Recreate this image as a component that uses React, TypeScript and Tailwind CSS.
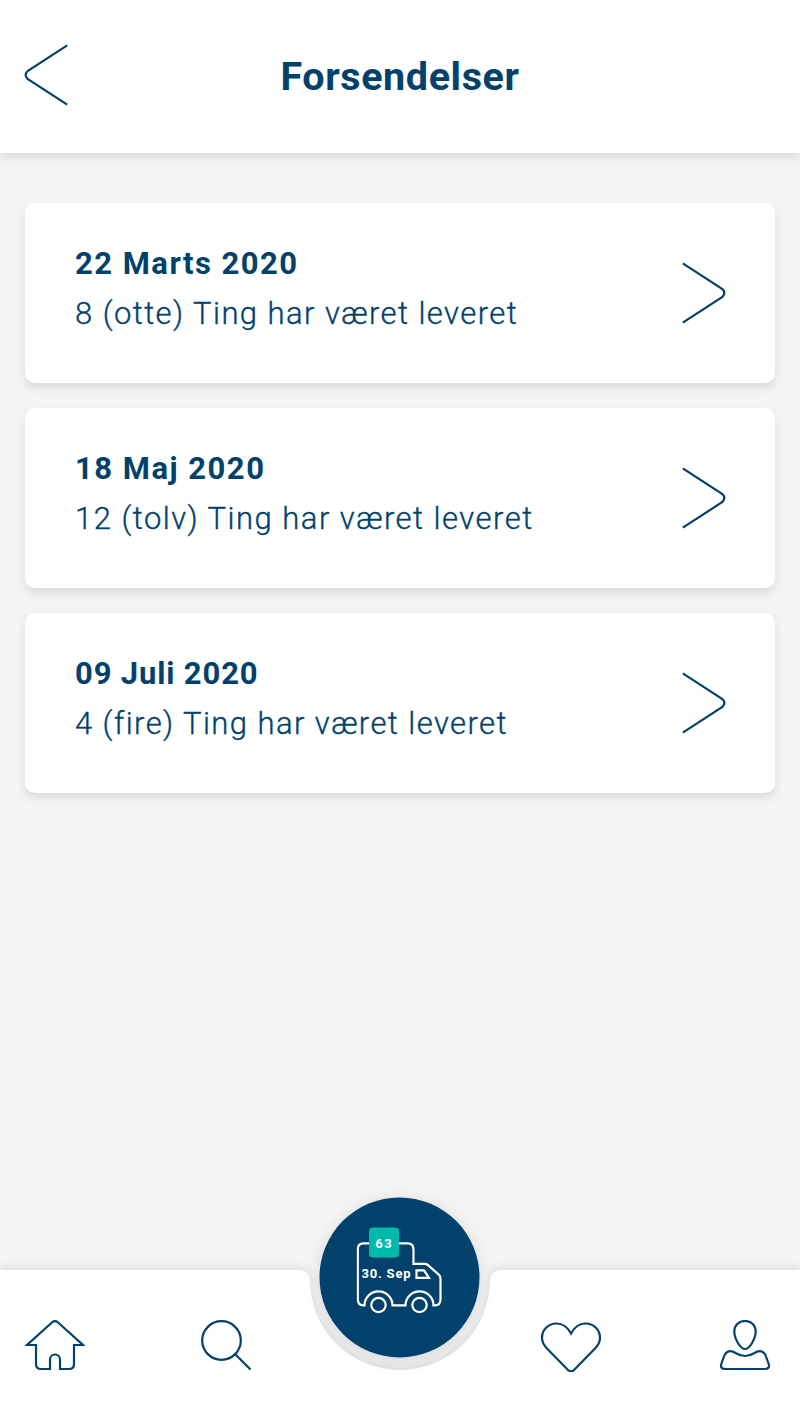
import clsx from "clsx"
import type { ReactNode } from "react"

interface Shipment {
	date: string
	summary: string
	dateTracking: string
	summaryTracking: string
}

const shipments: Shipment[] = [
	{
		date: "22 Marts 2020",
		summary: "8 (otte) Ting har været leveret",
		dateTracking: "tracking-[1.48px]",
		summaryTracking: "tracking-[1.44px]",
	},
	{
		date: "18 Maj 2020",
		summary: "12 (tolv) Ting har været leveret",
		dateTracking: "tracking-[1.5px]",
		summaryTracking: "tracking-[1.48px]",
	},
	{
		date: "09 Juli 2020",
		summary: "4 (fire) Ting har været leveret",
		dateTracking: "tracking-[0.85px]",
		summaryTracking: "tracking-[1.43px]",
	},
]

function Chevron({ className }: { className?: string }) {
	return (
		<svg viewBox="0 0 44 62" className={clsx("h-[62px] w-11 shrink-0", className)} fill="none" stroke="currentColor" strokeWidth="2.2">
			<path d="M.8 1.3 40.4 27Q44.2 31 40.4 35L.8 60.7" />
		</svg>
	)
}

function Header() {
	return (
		<header className="relative flex h-[153px] items-center justify-center bg-white shadow-[0_5px_10px_rgba(0,0,0,0.1)]">
			<button type="button" aria-label="Tilbage" className="absolute left-6 top-11">
				<Chevron className="rotate-180" />
			</button>
			<h1 className="text-[39.5px] leading-[50px] font-bold tracking-[0.6px]">Forsendelser</h1>
		</header>
	)
}

function ShipmentCard({ date, summary, dateTracking, summaryTracking }: Shipment) {
	return (
		<li className="flex h-[180px] items-center justify-between rounded-[10px] bg-white pl-[50px] pr-[49px] shadow-[0_5px_10px_rgba(0,0,0,0.1)]">
			<div className="-mt-2 whitespace-nowrap leading-[50px]">
				<h2 className={clsx("text-[31px] font-bold", dateTracking)}>{date}</h2>
				<p className={clsx("text-[31px] font-light [-webkit-text-stroke:0.35px]", summaryTracking)}>{summary}</p>
			</div>
			<Chevron />
		</li>
	)
}

function TruckIcon() {
	return (
		<svg viewBox="357 1226 86 88" className="h-[88px] w-[86px]" fill="none" stroke="#fff" strokeWidth="2.2">
			<path d="M365 1305H364Q358.300 1304.500 358.300 1299V1249Q358.300 1243 364 1243H408Q414 1243 414 1249V1263.500H425Q427 1263.500 428.500 1264.700L439 1274Q441 1275.800 441 1278.300V1299Q441 1304.500 435.500 1305H434A14 14 0 0 0 406 1305H393A14 14 0 0 0 365 1305Z" />
			<circle cx="379" cy="1304.6" r="7.2" />
			<circle cx="420" cy="1304.6" r="7.2" />
			<path d="M417 1270h7.500l5 7.500H417Z" />
			<rect x="369.5" y="1227.1" width="30" height="30" rx="4" fill="#00b9ad" stroke="none" />
			<g fill="#fff" stroke="none" fontSize="13" fontWeight="700">
				<text x="375.7" y="1247.3" textLength="16.5">63</text>
				<text x="362" y="1277.4" textLength="49">30. Sep</text>
			</g>
		</svg>
	)
}

function NavIcon({ label, className, children }: { label: string; className: string; children: ReactNode }) {
	return (
		<a href="#" aria-label={label} className="mt-[50px]">
			<svg viewBox={className.includes("60") ? "0 0 60 52" : "0 0 50 52"} className={className} fill="none" stroke="currentColor" strokeWidth="2.2">
				{children}
			</svg>
		</a>
	)
}

function BottomNav() {
	return (
		<nav className="relative flex h-[150px]">
			<div className="flex flex-1 drop-shadow-[0_-2px_4px_rgba(0,0,0,0.1)]">
				<div className="flex w-[310px] items-start gap-[115px] rounded-tr-[10px] bg-white pl-[25px]">
					<NavIcon label="Hjem" className="h-[52px] w-[60px]">
						<path d="M11 25H2L27.500 2Q30 0 32.500 2L58 25H49V44Q49 49 44 49H35V39.500a5 5 0 0 0-10 0V49H16Q11 49 11 44Z" />
					</NavIcon>
					<NavIcon label="Søg" className="h-[52px] w-[51px]">
						<circle cx="21" cy="20.5" r="19.3" />
						<path d="m34.500 34 15.500 15.500" />
					</NavIcon>
				</div>
				<svg viewBox="0 0 180 150" className="h-[150px] w-[180px]" fill="#fff">
					<path d="M0 10a90 90 0 0 0 180 0v140H0Z" />
				</svg>
				<div className="flex flex-1 items-start gap-[119px] rounded-tl-[10px] bg-white pl-[51px]">
					<NavIcon label="Favoritter" className="h-[52px] w-[60px]">
						<path d="M30 13.500C26 6 21 3.500 15.500 3.500C7 3.500 1 10 1 18c0 4 2 7.500 5 10.500L27 50q3 2.700 6 0L54 28.500c3-3 5-6.500 5-10.500C59 10 53 3.500 44.500 3.500C39 3.500 34 6 30 13.500Z" />
					</NavIcon>
					<NavIcon label="Profil" className="h-[52px] w-[50px]">
						<path d="M25 1C18.500 1 14.300 5.500 14.300 11.500C14.300 18 20 29 25 29S35.700 18 35.700 11.500C35.700 5.500 31.500 1 25 1Z" />
						<path d="M5 49Q0 49 1.300 44L4 36.500C6 30.500 11 30 15.500 33q9.500 6 19 0C39 30 44 30.500 46 36.500L48.700 44Q50 49 45 49Z" />
					</NavIcon>
				</div>
			</div>
			<button
				type="button"
				className="absolute left-80 -top-[73px] flex size-40 -translate-x-[0.5px] translate-y-[0.4px] items-start justify-center rounded-full bg-[#02416b] pt-[29px] shadow-[0_3px_16px_rgba(0,0,0,0.12)]"
			>
				<TruckIcon />
			</button>
		</nav>
	)
}

export default function App() {
	return (
		<div className="flex h-[1420px] w-[800px] flex-col overflow-hidden bg-[#f4f4f4] font-['Roboto',sans-serif] text-[#02416b]">
			<Header />
			<main className="flex-1 px-[25px] pt-[50px]">
				<ul className="flex flex-col gap-[25px]">
					{shipments.map((shipment) => (
						<ShipmentCard key={shipment.date} {...shipment} />
					))}
				</ul>
			</main>
			<BottomNav />
		</div>
	)
}
